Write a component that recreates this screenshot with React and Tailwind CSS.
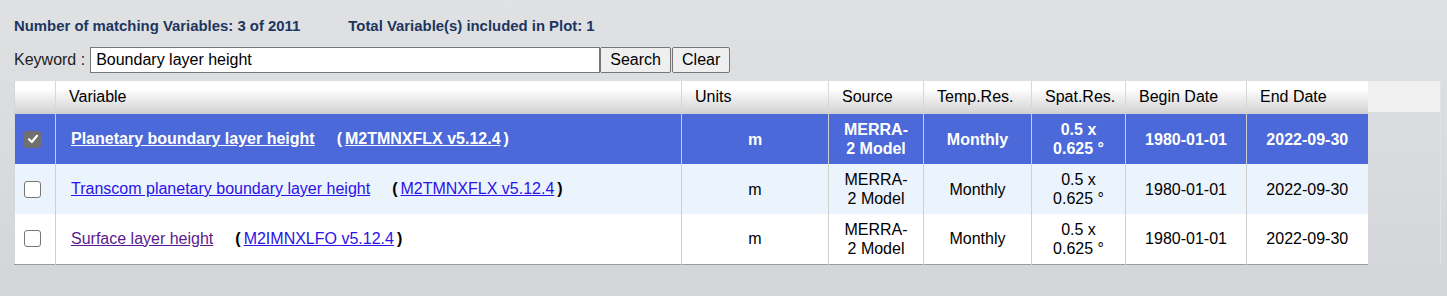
import React from "react";

const LINK = "text-[#2a12e8] underline";
const VISITED = "text-[#5b1a8e] underline";

function Check({ checked }) {
  if (checked) {
    return (
      <div className="w-[17px] h-[17px] rounded-[3px] bg-[#707070] flex items-center justify-center">
        <svg width="12" height="12" viewBox="0 0 12 12">
          <path d="M2 6.3 L4.8 9 L10 2.8" fill="none" stroke="#fff" strokeWidth="2.2" strokeLinecap="round" strokeLinejoin="round" />
        </svg>
      </div>
    );
  }
  return <div className="w-[17px] h-[17px] rounded-[3px] bg-white border border-[#767676]" />;
}

const rows = [
  {
    name: "Planetary boundary layer height",
    ds: "M2TMNXFLX v5.12.4",
    selected: true,
    bg: "bg-[#4b69d8]",
    nameCls: "text-white underline",
    dsCls: "text-white underline",
  },
  {
    name: "Transcom planetary boundary layer height",
    ds: "M2TMNXFLX v5.12.4",
    bg: "bg-[#ebf3fd]",
    nameCls: LINK,
    dsCls: LINK,
  },
  {
    name: "Surface layer height",
    ds: "M2IMNXLFO v5.12.4",
    bg: "bg-white",
    nameCls: VISITED,
    dsCls: LINK,
  },
];

const headers = [
  { t: "", w: "w-[41px]" },
  { t: "Variable", w: "w-[626px]" },
  { t: "Units", w: "w-[147px]" },
  { t: "Source", w: "w-[95px]" },
  { t: "Temp.Res.", w: "w-[108px]" },
  { t: "Spat.Res.", w: "w-[94px]" },
  { t: "Begin Date", w: "w-[121px]" },
  { t: "End Date", w: "w-[121px]" },
];

export default function App() {
  return (
    <div
      className="w-[1447px] h-[296px] overflow-hidden bg-gradient-to-b from-[#e0e1e3] to-[#d3d5d9] text-[16px] text-black"
      style={{ fontFamily: '"Liberation Sans", Arial, sans-serif' }}
    >
      <div className="pl-[14px] pt-[17px]">
        <div className="flex h-[18px] items-center text-[14.9px] font-bold text-[#1d355f] leading-[18px]">
          <span>Number of matching Variables: 3 of 2011</span>
          <span className="ml-[48px]">Total Variable(s) included in Plot: 1</span>
        </div>
        <div className="flex items-center mt-[12px] h-[26px]">
          <span className="text-[#222] mr-[5px]">Keyword :</span>
          <div className="w-[510px] h-[26px] bg-white border border-[#767676] flex items-center pl-[5px] text-black">
            Boundary layer height
          </div>
          <button className="h-[26px] w-[71px] bg-[#efefef] border border-[#767676] rounded-[2px] text-black">
            Search
          </button>
          <button className="ml-[1px] h-[26px] w-[58px] bg-[#efefef] border border-[#767676] rounded-[2px] text-black">
            Clear
          </button>
        </div>
        <div className="mt-[8px] flex w-[1427px] border-r border-[#e2e2e2]">
          <table className="border-collapse table-fixed w-[1353px] border-l border-[#d6d6d6]">
            <thead>
              <tr className="h-[32px]">
                {headers.map((h, i) => (
                  <th
                    key={i}
                    className={`${h.w} p-0 pl-[13px] text-left font-normal align-middle bg-gradient-to-b from-white from-[25%] to-[#d4d4d4] border-b-2 border-[#d0d0d0] ${
                      i > 0 ? "border-l border-l-[#d8d8d8]" : ""
                    }`}
                  >
                    {h.t}
                  </th>
                ))}
              </tr>
            </thead>
            <tbody>
              {rows.map((r, idx) => {
                const txt = r.selected ? "text-white font-bold" : "text-black";
                const cell = `p-0 text-center align-middle border-l border-[#cfcfcf] leading-[19px] ${txt}`;
                return (
                  <tr
                    key={idx}
                    className={`${idx === 0 ? "h-[51px] shadow-[inset_0_1px_0_#7c7c7c]" : "h-[50px]"} ${r.bg} ${
                      idx === rows.length - 1 ? "border-b border-[#9a9a9a]" : ""
                    }`}
                  >
                    <td className="p-0 pl-[9px] align-middle">
                      <Check checked={r.selected} />
                    </td>
                    <td className={`p-0 pl-[15px] text-left align-middle border-l border-[#cfcfcf] ${txt}`}>
                      <span className={r.nameCls}>{r.name}</span>
                      <span className={`ml-[22px] font-bold ${r.selected ? "text-white" : "text-black"}`}>(</span>
                      <span className={`ml-[3px] ${r.dsCls}`}>{r.ds}</span>
                      <span className={`ml-[3px] font-bold ${r.selected ? "text-white" : "text-black"}`}>)</span>
                    </td>
                    <td className={cell}>m</td>
                    <td className={`${cell} px-[12px]`}>MERRA-2 Model</td>
                    <td className={cell}>Monthly</td>
                    <td className={`${cell} px-[14px]`}>0.5 x 0.625 °</td>
                    <td className={cell}>1980-01-01</td>
                    <td className={cell}>2022-09-30</td>
                  </tr>
                );
              })}
            </tbody>
          </table>
          <div className="flex-1">
            <div className="h-[32px] bg-[#f0f0f0] border-b border-[#dcdcdc]" />
          </div>
        </div>
      </div>
    </div>
  );
}
